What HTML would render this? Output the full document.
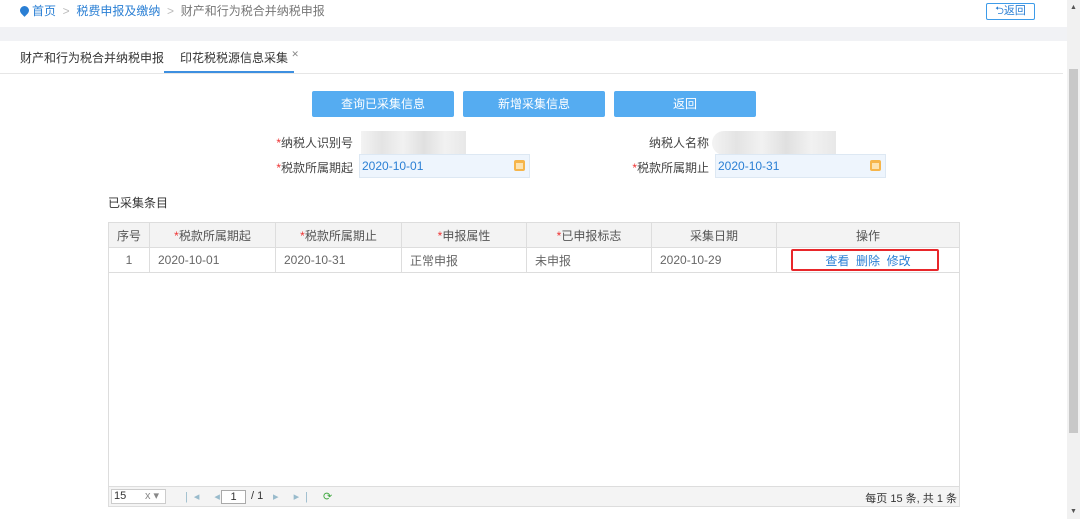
<!DOCTYPE html>
<html><head><meta charset="utf-8"><style>
*{margin:0;padding:0;box-sizing:border-box}
body{width:1080px;height:519px;overflow:hidden;background:#fff;font-family:"Liberation Sans","Noto Sans CJK SC",sans-serif;font-size:12px;color:#333;position:relative}
.a{position:absolute}
.btn{position:absolute;top:91px;width:142px;height:26px;background:#55acf1;border-radius:2px;color:#fff;text-align:center;line-height:26px;font-size:12px}
.lbl{position:absolute;text-align:right;width:120px;font-size:12px;color:#444}
.red{color:#e33}
.inp{position:absolute;height:24px;width:171px;background:#eef5fd;border:1px solid #dde8f3;color:#2a7fd4;line-height:22px;padding-left:2px;font-size:12px}
.cal{position:absolute;right:4px;top:5px;width:11px;height:11px;background:#f6b54a;border-radius:2px}
.cal:after{content:"";position:absolute;left:2px;top:3px;width:7px;height:6px;background:#fde3b0}
.blur{position:absolute;height:24px;background:linear-gradient(90deg,#f0f0f0,#ddd,#eee,#d8d8d8,#eee,#e2e2e2);opacity:.8}
table{position:absolute;left:108px;top:222px;border-collapse:collapse;font-size:12px}
td{border:1px solid #ddd;height:25px;color:#666;padding:0 8px}
tr.h td{background:#f3f3f3;text-align:center;color:#555}
</style></head><body>
<div class="a" style="left:20px;top:2px;color:#2a7fd4;font-size:12px"><span style="display:inline-block;width:9px;height:9px;border-radius:50% 50% 50% 0;transform:rotate(-45deg);background:#2a7fd4;margin-right:3px"></span>首页 <span style="color:#bbb">&nbsp;&gt;&nbsp;</span> 税费申报及缴纳 <span style="color:#bbb">&nbsp;&gt;&nbsp;</span> <span style="color:#777">财产和行为税合并纳税申报</span></div>
<div class="a" style="left:986px;top:3px;width:49px;height:17px;border:1px solid #3d9be9;border-radius:2px;color:#2a7fd4;font-size:11px;line-height:15px;text-align:center">⮌返回</div>
<div class="a" style="left:0;top:27px;width:1067px;height:14px;background:#f1f2f5"></div>
<div class="a" style="left:20px;top:49px;color:#333">财产和行为税合并纳税申报</div>
<div class="a" style="left:180px;top:49px;color:#333">印花税税源信息采集 <span style="font-size:9px;color:#888;vertical-align:top">✕</span></div>
<div class="a" style="left:164px;top:71px;width:130px;height:2px;background:#3d8fe0"></div>
<div class="a" style="left:0;top:73px;width:1063px;height:1px;background:#e6e6e6"></div>
<div class="btn" style="left:312px">查询已采集信息</div>
<div class="btn" style="left:463px">新增采集信息</div>
<div class="btn" style="left:614px">返回</div>
<div class="lbl" style="left:233px;top:134px"><span class="red">*</span>纳税人识别号</div>
<div class="blur" style="left:361px;top:131px;width:105px"></div>
<div class="lbl" style="left:233px;top:159px"><span class="red">*</span>税款所属期起</div>
<div class="inp" style="left:359px;top:154px">2020-10-01<div class="cal"></div></div>
<div class="lbl" style="left:589px;top:134px">纳税人名称</div>
<div class="blur" style="left:712px;top:131px;width:124px;border-radius:12px 0 0 12px"></div>
<div class="lbl" style="left:589px;top:159px"><span class="red">*</span>税款所属期止</div>
<div class="inp" style="left:715px;top:154px">2020-10-31<div class="cal"></div></div>
<div class="a" style="left:108px;top:194px;color:#333">已采集条目</div>
<div class="a" style="left:108px;top:222px;width:852px;height:285px;border:1px solid #ddd"></div>
<table>
<tr class="h"><td style="width:41px">序号</td><td style="width:126px"><span class="red">*</span>税款所属期起</td><td style="width:126px"><span class="red">*</span>税款所属期止</td><td style="width:125px"><span class="red">*</span>申报属性</td><td style="width:125px"><span class="red">*</span>已申报标志</td><td style="width:125px">采集日期</td><td style="width:183px">操作</td></tr>
<tr><td style="text-align:center">1</td><td>2020-10-01</td><td>2020-10-31</td><td>正常申报</td><td>未申报</td><td>2020-10-29</td><td style="text-align:center;color:#2a7fd4">查看&nbsp; 删除&nbsp; 修改</td></tr>
</table>
<div class="a" style="left:791px;top:249px;width:148px;height:22px;border:2px solid #e8262a;border-radius:2px"></div>
<div class="a" style="left:109px;top:486px;width:850px;height:20px;background:#f4f4f4;border-top:1px solid #ddd;font-size:11px">
<div class="a" style="left:2px;top:2px;width:55px;height:15px;background:#fff;border:1px solid #ccc;line-height:13px;padding-left:2px">15 <span style="position:absolute;left:33px;color:#888">x ▾</span></div>
<div class="a" style="left:76px;top:3px;color:#9bc;letter-spacing:6px">|◂ ◂</div>
<div class="a" style="left:112px;top:3px;width:25px;height:14px;background:#fff;border:1px solid #aaa;text-align:center;line-height:12px">1</div>
<div class="a" style="left:142px;top:3px">/ 1</div>
<div class="a" style="left:164px;top:3px;color:#9bc;letter-spacing:6px">▸ ▸|</div>
<div class="a" style="left:214px;top:3px;color:#4a4">⟳</div>
<div class="a" style="right:2px;top:3px;color:#333">每页 15 条, 共 1 条</div>
</div>
<div class="a" style="left:1067px;top:0;width:13px;height:519px;background:#f1f1f1"></div>
<div class="a" style="left:1069px;top:69px;width:9px;height:364px;background:#c8c8c8"></div>
<div class="a" style="left:1070px;top:4px;font-size:7px;color:#555">▲</div>
<div class="a" style="left:1070px;top:508px;font-size:7px;color:#555">▼</div>
</body></html>
